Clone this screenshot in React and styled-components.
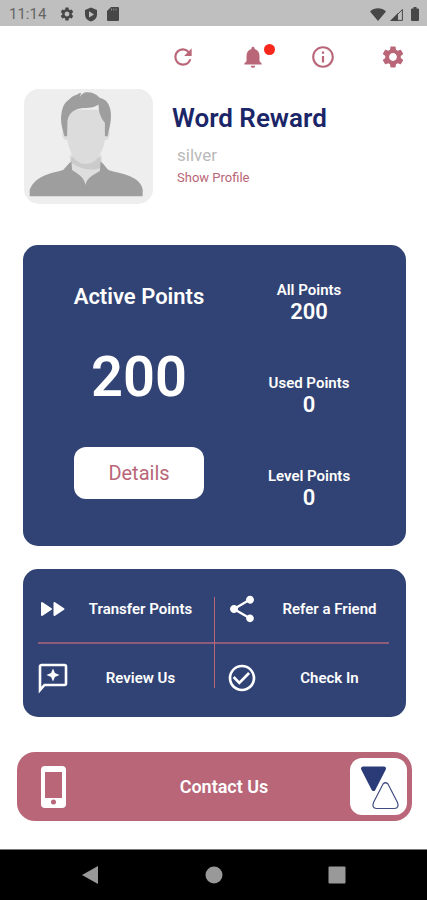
import React from 'react';
import styled, { createGlobalStyle } from 'styled-components';
import {
  MdCheckCircleOutline,
  MdInfoOutline,
  MdNotifications,
  MdRefresh,
  MdSettings,
  MdShare,
} from 'react-icons/md';

const colors = {
  navy: '#314374',
  title: '#1b2668',
  rose: '#b96678',
  line: '#8f5c7c',
  white: '#ffffff',
  muted: '#b9b9b9',
  statusBar: '#bfbfbf',
  statusIcon: '#474747',
  navIcon: '#999999',
};

const GlobalStyle = createGlobalStyle`
  *, *::before, *::after {
    box-sizing: border-box;
  }

  body {
    margin: 0;
    background: ${colors.white};
    font-family: Roboto, 'Liberation Sans', sans-serif;
  }

  h1, h2, p, dl, dt, dd {
    margin: 0;
  }

  button {
    padding: 0;
    border: 0;
    background: none;
    color: inherit;
    font: inherit;
    cursor: pointer;
  }

  svg {
    display: block;
    flex-shrink: 0;
  }
`;

const Page = styled.div`
  display: flex;
  flex-direction: column;
  min-height: 100vh;
`;

const StatusBar = styled.div`
  display: flex;
  align-items: center;
  justify-content: space-between;
  height: 26px;
  padding: 2px 8px 0 9px;
  background: ${colors.statusBar};
  color: ${colors.statusIcon};
`;

const StatusGroup = styled.div`
  display: flex;
  align-items: center;
  gap: ${({ $gap }) => $gap}px;
`;

const Clock = styled.time`
  margin-right: 4px;
  color: #666666;
  font-size: 15px;
  line-height: 20px;
`;

const Toolbar = styled.nav`
  display: flex;
  align-items: center;
  justify-content: flex-end;
  gap: 44px;
  height: 62px;
  padding-right: 21px;
`;

const IconButton = styled.button`
  position: relative;
  color: ${colors.rose};
`;

const Badge = styled.span`
  position: absolute;
  top: 0;
  right: -9px;
  width: 11px;
  height: 11px;
  border-radius: 50%;
  background: #f8281c;
`;

const Profile = styled.header`
  display: flex;
  gap: 19px;
  padding: 1px 24px 0;
`;

const Avatar = styled.div`
  width: 129px;
  height: 115px;
  border-radius: 15px;
  overflow: hidden;
  background: #eeeeee;
`;

const ProfileText = styled.div`
  display: flex;
  flex-direction: column;
  align-items: flex-start;
  padding-top: 14px;
`;

const Name = styled.h1`
  color: ${colors.title};
  font-size: 26px;
  font-weight: 600;
  line-height: 30px;
`;

const Tier = styled.p`
  padding: 12px 0 0 5px;
  color: ${colors.muted};
  font-size: 17px;
  line-height: 20px;
`;

const ProfileLink = styled.a`
  padding: 5px 0 0 5px;
  color: ${colors.rose};
  font-size: 13px;
  line-height: 16px;
  text-decoration: none;
`;

const Main = styled.main`
  display: flex;
  flex-direction: column;
  padding: 41px 21px 28px 23px;
`;

const PointsCard = styled.section`
  display: grid;
  grid-template-columns: 1fr 1fr;
  padding: 36px 12px 35px 31px;
  border-radius: 15px;
  background: ${colors.navy};
  color: ${colors.white};
`;

const ActivePoints = styled.div`
  display: flex;
  flex-direction: column;
  align-items: center;
  padding-top: 4px;
`;

const ActiveTitle = styled.h2`
  font-size: 22px;
  font-weight: 600;
  line-height: 24px;
`;

const ActiveValue = styled.p`
  padding: 36px 0 38px;
  font-size: 56px;
  font-weight: 600;
  line-height: 64px;
`;

const DetailsButton = styled.button`
  width: 130px;
  height: 52px;
  border-radius: 12px;
  background: ${colors.white};
  color: ${colors.rose};
  font-size: 20px;
`;

const Totals = styled.dl`
  display: flex;
  flex-direction: column;
  gap: 49px;
`;

const Total = styled.div`
  text-align: center;
`;

const TotalLabel = styled.dt`
  font-size: 15px;
  font-weight: 600;
  line-height: 18px;
`;

const TotalValue = styled.dd`
  font-size: 22px;
  font-weight: 600;
  line-height: 26px;
`;

const ActionsCard = styled.section`
  position: relative;
  display: grid;
  grid-template-columns: 1fr 1fr;
  margin-top: 23px;
  padding: 6px 5px 6px 0;
  border-radius: 15px;
  background: ${colors.navy};
  color: ${colors.white};

  /* vertical rule that crosses the row divider */
  &::after {
    content: '';
    position: absolute;
    top: 28px;
    bottom: 29px;
    left: calc(50% - 1px);
    width: 1px;
    background: ${colors.rose};
  }
`;

const Divider = styled.hr`
  grid-column: 1 / -1;
  width: auto;
  height: 2px;
  margin: 0 12px 0 15px;
  border: 0;
  background: ${colors.line};
`;

const ActionButton = styled.button`
  display: flex;
  align-items: center;
  height: 67px;
  padding-left: 14px;
`;

const ActionLabel = styled.span`
  flex: 1;
  font-size: 15px;
  font-weight: 600;
  line-height: 20px;
  text-align: center;
`;

const ContactButton = styled.button`
  display: flex;
  align-items: center;
  height: 69px;
  margin: 35px -6px 0;
  padding: 0 5px 0 24px;
  border-radius: 18px;
  background: ${colors.rose};
  color: ${colors.white};
`;

const ContactLabel = styled.span`
  flex: 1;
  padding-left: 32px;
  font-size: 18px;
  font-weight: 600;
  text-align: center;
`;

const LogoTile = styled.span`
  width: 57px;
  height: 57px;
  border-radius: 12px;
  background: ${colors.white};
`;

const SystemNav = styled.nav`
  display: flex;
  align-items: center;
  justify-content: center;
  gap: 105px;
  height: 51px;
  margin-top: auto;
  border-top: 1px solid #777777;
  background: #000000;
  color: ${colors.navIcon};
`;

const ShieldIcon = () => (
  <svg width="14" height="15" viewBox="0 0 14 15" fill="currentColor">
    <path fillRule="evenodd" d="M7 .5 13 3v4.5c0 3.500-2.500 6-6 7-3.500-1-6-3.500-6-7V3zM5 4.300v6.200l5-3.100z" />
  </svg>
);

const CardIcon = () => (
  <svg width="12" height="14" viewBox="0 0 12 14" fill="currentColor">
    <path d="M4 0h7a1 1 0 0 1 1 1v12a1 1 0 0 1-1 1H1a1 1 0 0 1-1-1V4z" />
    <path d="M4.500 1.500v2M6.700 1.500v2M9 1.500v2" stroke="#8a8a8a" />
  </svg>
);

const WifiIcon = () => (
  <svg width="16" height="13" viewBox="0 0 16 13" fill="currentColor">
    <path d="M0 3.500C4.500-.8 11.500-.8 16 3.500L8 13z" />
  </svg>
);

const SignalIcon = () => (
  <svg width="13" height="13" viewBox="0 0 13 13" fill="currentColor">
    <path d="M0 13 8 5v8z" />
    <path d="M1.500 12.400 12.400 1.500v10.900z" fill="none" stroke="currentColor" />
  </svg>
);

const BatteryIcon = () => (
  <svg width="8" height="14" viewBox="0 0 8 14" fill="currentColor">
    <path d="M2.500 0h3v1.500H7a1 1 0 0 1 1 1V13a1 1 0 0 1-1 1H1a1 1 0 0 1-1-1V2.500a1 1 0 0 1 1-1h1.500z" />
  </svg>
);

const Portrait = () => (
  <svg width="100%" height="100%" viewBox="44 28 384 344" role="img" aria-label="Profile photo">
    <path d="M180 225h96v60l-48 35-48-35z" fill="#dedede" />
    <path d="M184 232h88v32c-30 10-62 4-88-16z" fill="#cbcbcb" />
    <path d="M168 152c-12 0-13 10-8 20 3 6 6 9 13 9 6 36 22 71 55 71s50-35 57-71c7 0 10-3 12-9 4-10 4-20-7-20V90H168z" fill="#dcdcdc" />
    <path d="M164 169c-6-22-13-42-9-66 3-22 9-34 22-43 8-8 14-13 24-15 4-3 8-5 13-5l-4 12c6-8 11-13 18-14 18-1 32 5 42 17 18 3 28 17 32 37 4 28-3 51-9 77h-8v-40c-12-14-19-32-19-55-20 15-38 7-59 13-21 6-31 17-34 37-1 15 0 30-1 45z" fill="#9e9e9e" />
    <path d="M60 349v-20c10-24 26-34 48-44 17-7 35-10 52-15 8-7 14-17 25-25l2 25c14 11 35 17 40 45 5-22 18-27 43-42l2-28c12 9 17 20 25 26 22 6 44 10 65 19 18 9 31 18 36 38v21z" fill="#9e9e9e" />
  </svg>
);

const ForwardIcon = () => (
  <svg width="32" height="32" viewBox="0 0 32 32" fill="currentColor" stroke="currentColor" strokeWidth="2" strokeLinejoin="round">
    <path d="M5 10v12l9-6zM17.500 10v12l9-6z" />
  </svg>
);

const ReviewIcon = () => (
  <svg width="32" height="32" viewBox="0 0 32 32">
    <path d="M3 28V4.500A1.500 1.500 0 0 1 4.500 3h23A1.500 1.500 0 0 1 29 4.500v17a1.500 1.500 0 0 1-1.500 1.500H7.500z" fill="none" stroke="currentColor" strokeWidth="2.600" />
    <path d="m16 6.500 1.900 4.600 4.600 1.900-4.600 1.900-1.900 4.600-1.900-4.600L9.500 13l4.600-1.900z" fill="currentColor" />
  </svg>
);

const PhoneIcon = () => (
  <svg width="25" height="42" viewBox="0 0 25 42" fill="currentColor">
    <path fillRule="evenodd" d="M4 0h17a4 4 0 0 1 4 4v34a4 4 0 0 1-4 4H4a4 4 0 0 1-4-4V4a4 4 0 0 1 4-4zm0 6v26h17V6zm8.500 27.500a2.500 2.500 0 1 0 0 5 2.500 2.500 0 0 0 0-5z" />
  </svg>
);

const TrianglesLogo = () => (
  <svg width="57" height="57" viewBox="0 0 57 57">
    <path
      d="M13 10.500h21L23.500 31z"
      fill="#2a3b78"
      stroke="#2a3b78"
      strokeWidth="4"
      strokeLinejoin="round"
    />
    <path
      d="M33 26q2.500-2.500 5 0l9.500 18.500q2 5.500-3 6h-18q-5-.5-3-6z"
      fill="#ffffff"
      stroke="#414c82"
      strokeWidth="1.200"
    />
  </svg>
);

const totals = [
  { label: 'All Points', value: 200 },
  { label: 'Used Points', value: 0 },
  { label: 'Level Points', value: 0 },
];

const App = () => {
  return (
    <>
      <GlobalStyle />
      <Page>
        <StatusBar>
          <StatusGroup $gap={9}>
            <Clock>11:14</Clock>
            <MdSettings size={16} />
            <ShieldIcon />
            <CardIcon />
          </StatusGroup>
          <StatusGroup $gap={4}>
            <WifiIcon />
            <SignalIcon />
            <span />
            <BatteryIcon />
          </StatusGroup>
        </StatusBar>

        <Toolbar>
          <IconButton aria-label="Refresh">
            <MdRefresh size={26} />
          </IconButton>
          <IconButton aria-label="Notifications">
            <MdNotifications size={26} />
            <Badge />
          </IconButton>
          <IconButton aria-label="Information">
            <MdInfoOutline size={26} />
          </IconButton>
          <IconButton aria-label="Settings">
            <MdSettings size={26} />
          </IconButton>
        </Toolbar>

        <Profile>
          <Avatar>
            <Portrait />
          </Avatar>
          <ProfileText>
            <Name>Word Reward</Name>
            <Tier>silver</Tier>
            <ProfileLink href="#profile">Show Profile</ProfileLink>
          </ProfileText>
        </Profile>

        <Main>
          <PointsCard>
            <ActivePoints>
              <ActiveTitle>Active Points</ActiveTitle>
              <ActiveValue>200</ActiveValue>
              <DetailsButton>Details</DetailsButton>
            </ActivePoints>
            <Totals>
              {totals.map(({ label, value }) => (
                <Total key={label}>
                  <TotalLabel>{label}</TotalLabel>
                  <TotalValue>{value}</TotalValue>
                </Total>
              ))}
            </Totals>
          </PointsCard>

          <ActionsCard>
            <ActionButton>
              <ForwardIcon />
              <ActionLabel>Transfer Points</ActionLabel>
            </ActionButton>
            <ActionButton>
              <MdShare size={32} />
              <ActionLabel>Refer a Friend</ActionLabel>
            </ActionButton>
            <Divider />
            <ActionButton>
              <ReviewIcon />
              <ActionLabel>Review Us</ActionLabel>
            </ActionButton>
            <ActionButton>
              <MdCheckCircleOutline size={32} />
              <ActionLabel>Check In</ActionLabel>
            </ActionButton>
          </ActionsCard>

          <ContactButton>
            <PhoneIcon />
            <ContactLabel>Contact Us</ContactLabel>
            <LogoTile>
              <TrianglesLogo />
            </LogoTile>
          </ContactButton>
        </Main>

        <SystemNav>
          <button aria-label="Back">
            <svg width="18" height="20" viewBox="0 0 18 20" fill="currentColor">
              <path d="M16 1v18L0 10z" />
            </svg>
          </button>
          <button aria-label="Home">
            <svg width="18" height="18" viewBox="0 0 18 18" fill="currentColor">
              <circle cx="9" cy="9" r="8.500" />
            </svg>
          </button>
          <button aria-label="Recent apps">
            <svg width="18" height="18" viewBox="0 0 18 18" fill="currentColor">
              <rect x=".5" y=".5" width="17" height="17" rx="1" />
            </svg>
          </button>
        </SystemNav>
      </Page>
    </>
  );
};

export default App;
